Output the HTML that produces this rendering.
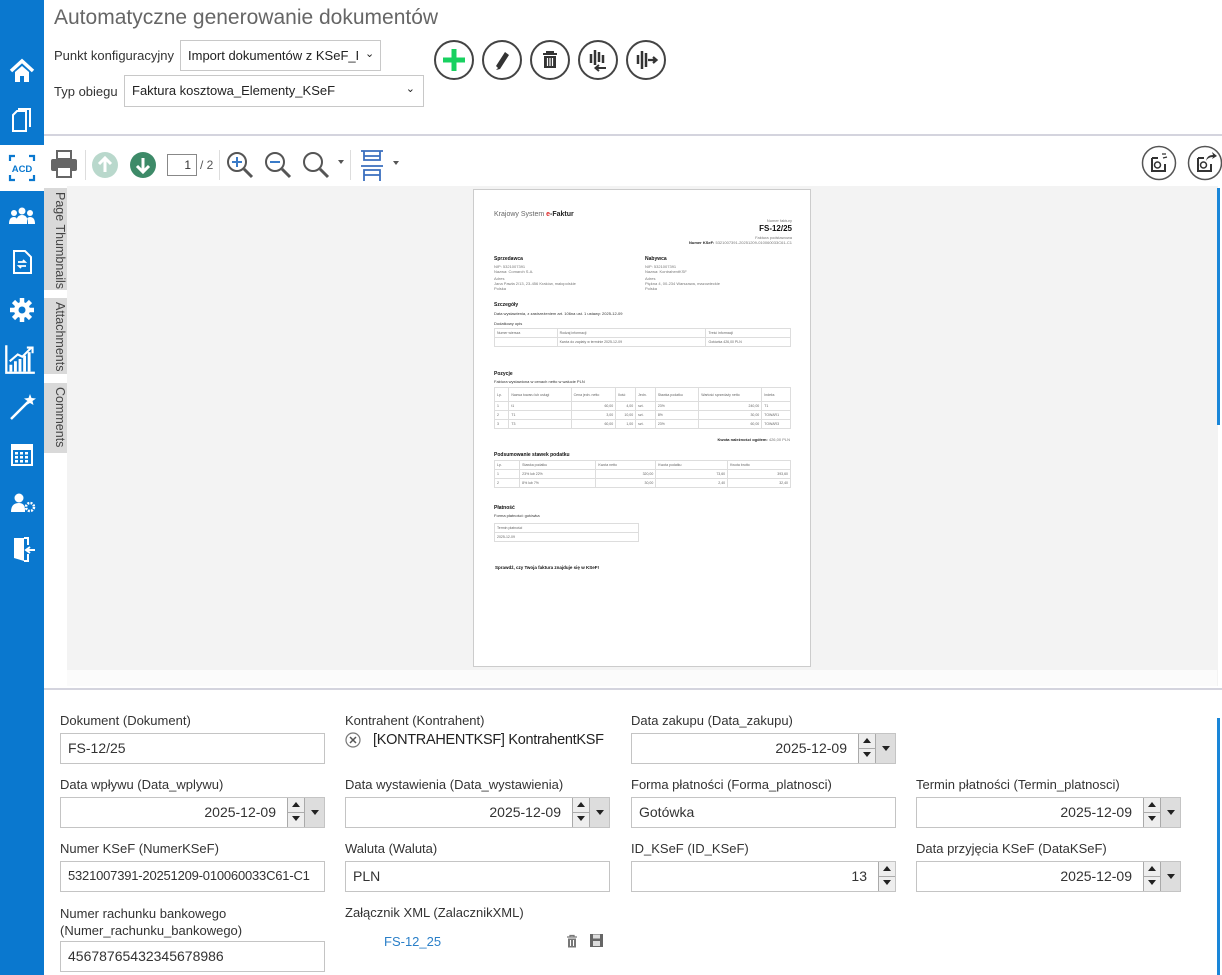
<!DOCTYPE html>
<html><head><meta charset="utf-8"><style>
*{box-sizing:border-box;margin:0;padding:0}
body{width:1222px;height:975px;overflow:hidden;background:#fff;font-family:"Liberation Sans",sans-serif;position:relative;color:#333}
.abs{position:absolute}
.side{left:0;top:0;width:44px;height:975px;background:#0a78cf}
.sel{left:0;top:145px;width:44px;height:46px;background:#fff}
.ic{position:absolute;left:8px;width:28px;height:28px}
.title{left:54px;top:6px;font-size:21px;color:#666;font-weight:normal}
.lbl{font-size:13px;color:#333}
.sel1{border:1px solid #c8c8c8;height:31px;font-size:13px;color:#222;padding:7px 7px;background:#fff;white-space:nowrap;overflow:hidden}
.circ{width:40px;height:40px;border:2px solid #444;border-radius:50%;top:40px}
.hline{left:44px;width:1178px;height:2px;background:#d4d4de}
.tab{left:44px;width:23px;background:#d9d9d9;writing-mode:vertical-rl;font-size:12.5px;color:#444;padding-top:4px}
.page{left:473px;top:189px;width:338px;height:478px;background:#fff;border:1px solid #ccc;font-size:4px;color:#777}
.page div{position:absolute}
.b{color:#111;font-weight:bold}
table{border-collapse:collapse;position:absolute;font-size:3.5px;color:#666}
td{border:1px solid #ddd;padding:2px 2px;height:8px}
.fl{position:absolute;font-size:13px;color:#333;white-space:nowrap}
.in{position:absolute;height:31px;border:1px solid #c4c4c4;font-size:14px;color:#333;padding:6px 7px;background:#fff;white-space:nowrap;overflow:hidden}
.dt{text-align:right;padding-right:48px}
.sp{position:absolute;right:20px;top:0;width:17px;height:29px;border-left:1px solid #aaa;background:#eee}
.sp:before{content:"";position:absolute;left:4px;top:4px;border:4px solid transparent;border-bottom:5px solid #222;border-top:0}
.sp:after{content:"";position:absolute;left:4px;top:18px;border:4px solid transparent;border-top:5px solid #222;border-bottom:0}
.sp i{position:absolute;left:0;top:14px;width:16px;height:1px;background:#aaa}
.dd{position:absolute;right:0;top:0;width:20px;height:29px;background:#ddd;border-left:1px solid #aaa}
.dd:after{content:"";position:absolute;left:6px;top:12px;border:4px solid transparent;border-top:5px solid #222;border-bottom:0}
</style></head><body>
<div class="abs side"></div>
<div class="abs sel"></div>
<svg class="ic" style="top:57px" viewBox="0 0 28 28"><path d="M3 14 L14 4 L25 14" stroke="#fff" stroke-width="3.5" fill="none"/><path d="M7 15 V25 H12 V19 H16 V25 H21 V15 L14 9Z" fill="#fff"/></svg>
<svg class="ic" style="top:105px" viewBox="0 0 28 28"><path d="M10 4 H22 V22" stroke="#fff" stroke-width="2" fill="none"/><path d="M5 10 L9 6 H18 V26 H5 Z" stroke="#fff" stroke-width="2" fill="none"/></svg>
<svg class="ic" style="top:154px" viewBox="0 0 28 28"><path d="M2 7V2H7M21 2H26V7M2 21V26H7M21 26H26V21" stroke="#0a78cf" stroke-width="2.2" fill="none"/><text x="14" y="18" font-size="9.5" font-weight="bold" fill="#0a78cf" text-anchor="middle" font-family="Liberation Sans">ACD</text></svg>
<svg class="ic" style="top:202px" viewBox="0 0 28 28"><circle cx="14" cy="9" r="3.5" fill="#fff"/><circle cx="6" cy="11" r="3" fill="#fff"/><circle cx="22" cy="11" r="3" fill="#fff"/><path d="M8 22 Q8 13 14 13 Q20 13 20 22Z M1 22 Q1 15 6 15 Q9 15 9 18 V22Z M27 22 Q27 15 22 15 Q19 15 19 18 V22Z" fill="#fff"/></svg>
<svg class="ic" style="top:248px" viewBox="0 0 28 28"><path d="M6 3 H17 L23 9 V25 H6 Z" stroke="#fff" stroke-width="2" fill="none"/><path d="M10 14 H17 L15 12 M18 18 H11 L13 20" stroke="#fff" stroke-width="1.8" fill="none"/></svg>
<svg class="ic" style="top:296px" viewBox="0 0 28 28"><circle cx="14" cy="14" r="8" fill="#fff"/><path d="M14 2V26M2 14H26M5.5 5.5L22.5 22.5M22.5 5.5L5.5 22.5" stroke="#fff" stroke-width="4.5"/><circle cx="14" cy="14" r="3.5" fill="#0a78cf"/></svg>
<svg class="ic" style="top:343px;left:4px;width:32px;height:32px" viewBox="0 0 28 28"><path d="M2 2V26H27" stroke="#fff" stroke-width="2" fill="none"/><path d="M6 25V19M10 25V16M14 25V14M18 25V11M22 25V8" stroke="#fff" stroke-width="2.5"/><path d="M5 16 L12 10 L16 12 L24 4 M20 4H25V9" stroke="#fff" stroke-width="1.8" fill="none"/></svg>
<svg class="ic" style="top:392px" viewBox="0 0 28 28"><path d="M3 27 L20 10" stroke="#fff" stroke-width="2.5"/><path d="M22 2 L23.5 6 L28 6.5 L24.5 9 L25.5 13 L22 11 L18.5 13 L19.5 9 L16 6.5 L20.5 6Z" fill="#fff"/></svg>
<svg class="ic" style="top:441px" viewBox="0 0 28 28"><rect x="3" y="3" width="22" height="22" fill="#fff"/><rect x="5" y="9" width="18" height="14" fill="#0a78cf"/><g fill="#fff"><rect x="7" y="11" width="3" height="2.5"/><rect x="12" y="11" width="3" height="2.5"/><rect x="17" y="11" width="3" height="2.5"/><rect x="7" y="15" width="3" height="2.5"/><rect x="12" y="15" width="3" height="2.5"/><rect x="17" y="15" width="3" height="2.5"/><rect x="7" y="19" width="3" height="2.5"/><rect x="12" y="19" width="3" height="2.5"/><rect x="17" y="19" width="3" height="2.5"/></g></svg>
<svg class="ic" style="top:488px" viewBox="0 0 28 28"><circle cx="11" cy="10" r="4.5" fill="#fff"/><path d="M3 24 Q3 15 11 15 Q17 15 17 22 V24Z" fill="#fff"/><circle cx="22" cy="19" r="4" fill="none" stroke="#fff" stroke-width="2.5" stroke-dasharray="2 1.2"/></svg>
<svg class="ic" style="top:535px" viewBox="0 0 28 28"><path d="M6 3 H16 V26 L6 23Z" fill="#fff"/><path d="M16 3 H20 V10 M20 19 V26 H16" stroke="#fff" stroke-width="2" fill="none"/><path d="M18 15 H27 M22 12 L18 15 L22 18" stroke="#fff" stroke-width="2" fill="none"/></svg>

<div class="abs title">Automatyczne generowanie dokumentów</div>
<div class="abs lbl" style="left:54px;top:48px">Punkt konfiguracyjny</div>
<div class="abs sel1" style="left:180px;top:40px;width:201px">Import dokumentów z KSeF_Fa<span style="position:absolute;right:0;top:0;width:22px;height:29px;background:#fff;font-size:11px;padding:6px 7px">⌄</span></div>
<div class="abs lbl" style="left:54px;top:84px">Typ obiegu</div>
<div class="abs sel1" style="left:124px;top:75px;width:300px;height:32px">Faktura kosztowa_Elementy_KSeF<span style="position:absolute;right:8px;top:6px;font-size:11px">⌄</span></div>

<div class="abs circ" style="left:434px"><svg width="36" height="36" viewBox="0 0 36 36"><path d="M18 7V29M7 18H29" stroke="#18d160" stroke-width="5"/></svg></div>
<div class="abs circ" style="left:482px"><svg width="36" height="36" viewBox="0 0 36 36"><path d="M14 26 L12 24 L21 10 L25 13 L16 27 L12 28Z" fill="#333"/></svg></div>
<div class="abs circ" style="left:530px"><svg width="36" height="36" viewBox="0 0 36 36"><path d="M11 12H25M15 12V10H21V12" stroke="#333" stroke-width="2" fill="none"/><path d="M12 14H24V26H12Z" fill="#333"/><path d="M15.5 16V24M18 16V24M20.5 16V24" stroke="#fff" stroke-width="1.2"/></svg></div>
<div class="abs circ" style="left:578px"><svg width="36" height="36" viewBox="0 0 36 36"><path d="M11 12V21M15 8V23M19 10V20M23 13V21" stroke="#333" stroke-width="2.5"/><path d="M26 26H16M19 23L15.5 26L19 29" stroke="#333" stroke-width="2" fill="none"/></svg></div>
<div class="abs circ" style="left:626px"><svg width="36" height="36" viewBox="0 0 36 36"><path d="M10 13V22M14 9V27M18 11V25" stroke="#333" stroke-width="2.5"/><path d="M20 18H28M25 15L28.5 18L25 21" stroke="#333" stroke-width="2.2" fill="none"/></svg></div>

<div class="abs hline" style="top:134px"></div>

<svg class="abs" style="left:48px;top:148px" width="32" height="32" viewBox="0 0 32 32"><rect x="9" y="3" width="14" height="8" fill="none" stroke="#666" stroke-width="2"/><rect x="3" y="11" width="26" height="12" rx="2" fill="#666"/><rect x="9" y="19" width="14" height="10" fill="#fff" stroke="#666" stroke-width="2"/></svg>
<div class="abs" style="left:85px;top:150px;width:1px;height:30px;background:#ddd"></div>
<svg class="abs" style="left:91px;top:151px" width="28" height="28" viewBox="0 0 28 28"><circle cx="14" cy="14" r="13" fill="#b9d8cc"/><path d="M14 21V8M8 13L14 7L20 13" stroke="#fff" stroke-width="3" fill="none"/></svg>
<svg class="abs" style="left:129px;top:151px" width="28" height="28" viewBox="0 0 28 28"><circle cx="14" cy="14" r="13" fill="#3d8a68"/><path d="M14 7V20M8 15L14 21L20 15" stroke="#fff" stroke-width="3" fill="none"/></svg>
<div class="abs" style="left:167px;top:154px;width:30px;height:22px;border:1px solid #888;font-size:12px;text-align:right;padding:3px 5px;color:#333">1</div>
<div class="abs" style="left:200px;top:158px;font-size:12px;color:#555">/ 2</div>
<div class="abs" style="left:219px;top:150px;width:1px;height:30px;background:#ddd"></div>
<svg class="abs" style="left:224px;top:149px" width="32" height="32" viewBox="0 0 32 32"><circle cx="13" cy="13" r="9" fill="none" stroke="#555" stroke-width="2"/><path d="M20 20L28 28" stroke="#555" stroke-width="3"/><path d="M13 8V18M8 13H18" stroke="#3a7bc8" stroke-width="2"/></svg>
<svg class="abs" style="left:262px;top:149px" width="32" height="32" viewBox="0 0 32 32"><circle cx="13" cy="13" r="9" fill="none" stroke="#555" stroke-width="2"/><path d="M20 20L28 28" stroke="#555" stroke-width="3"/><path d="M8 13H18" stroke="#3a7bc8" stroke-width="2"/></svg>
<svg class="abs" style="left:300px;top:149px" width="32" height="32" viewBox="0 0 32 32"><circle cx="13" cy="13" r="9" fill="none" stroke="#555" stroke-width="2"/><path d="M20 20L28 28" stroke="#555" stroke-width="3"/></svg>
<div class="abs" style="left:338px;top:160px;border:3px solid transparent;border-top:4px solid #555"></div>
<div class="abs" style="left:350px;top:150px;width:1px;height:30px;background:#ddd"></div>
<svg class="abs" style="left:358px;top:148px" width="28" height="34" viewBox="0 0 28 34"><path d="M3 3H25M6 3V12H22V3M6 8H22M3 18H25M6 33V22H22V33M6 27H22" stroke="#3a6fbf" stroke-width="1.8" fill="none"/></svg>
<div class="abs" style="left:393px;top:161px;border:3px solid transparent;border-top:4px solid #555"></div>
<svg class="abs" style="left:1141px;top:145px" width="36" height="36" viewBox="0 0 36 36"><circle cx="18" cy="18" r="16.5" fill="#fff" stroke="#555" stroke-width="1.5"/><path d="M11 13H17M11 13V26H24V19" stroke="#333" stroke-width="2" fill="none"/><circle cx="16.5" cy="20" r="3" fill="none" stroke="#333" stroke-width="1.5"/><path d="M21 9L25 9M22 13L26 12" stroke="#333" stroke-width="1.3"/></svg>
<svg class="abs" style="left:1187px;top:145px" width="36" height="36" viewBox="0 0 36 36"><circle cx="18" cy="18" r="16.5" fill="#fff" stroke="#555" stroke-width="1.5"/><path d="M11 13H17M11 13V26H24V19" stroke="#333" stroke-width="2" fill="none"/><circle cx="16.5" cy="20" r="3" fill="none" stroke="#333" stroke-width="1.5"/><path d="M19 16Q20 10 26 10L25 7L30 11L25 14L26 12Q21 12 19 16Z" fill="#333"/></svg>

<div class="abs" style="left:67px;top:186px;width:1151px;height:500px;background:#f3f3f3"></div>
<div class="abs" style="left:67px;top:670px;width:1150px;height:16px;background:#fbfbfb"></div>
<div class="abs" style="left:1217px;top:188px;width:3px;height:237px;background:#1a86d8"></div>
<div class="abs tab" style="left:44px;top:188px;height:102px">Page Thumbnails</div>
<div class="abs tab" style="left:44px;top:298px;height:76px">Attachments</div>
<div class="abs tab" style="left:44px;top:383px;height:70px">Comments</div>

<div class="abs page">
<div style="left:20px;top:21px;font-size:7px;color:#666">Krajowy System <b style="color:#d22">e</b><b style="color:#222">-Faktur</b></div>
<div style="right:18px;top:28px">Numer faktury</div>
<div class="b" style="right:18px;top:34px;font-size:8px">FS-12/25</div>
<div style="right:18px;top:45px">Faktura podstawowa</div>
<div style="right:18px;top:50px"><b style="color:#222">Numer KSeF:</b> 5321007391-20251209-010060033C61-C1</div>
<div class="b" style="left:20px;top:66px;font-size:5px">Sprzedawca</div>
<div style="left:20px;top:74px">NIP: 5321007391<br>Nazwa: Comarch S.A.</div>
<div style="left:20px;top:86px">Adres<br>Jana Pawła 2/13, 23-456 Kraków, małopolskie<br>Polska</div>
<div class="b" style="left:171px;top:66px;font-size:5px">Nabywca</div>
<div style="left:171px;top:74px">NIP: 5321007391<br>Nazwa: KontrahentKSF</div>
<div style="left:171px;top:86px">Adres<br>Piękna 4, 00-234 Warszawa, mazowieckie<br>Polska</div>
<div class="b" style="left:20px;top:112px;font-size:5px">Szczegóły</div>
<div style="left:20px;top:121px;color:#333">Data wystawienia, z zastrzeżeniem art. 106na ust. 1 ustawy: 2025-12-09</div>
<div style="left:20px;top:131px;color:#333">Dodatkowy opis</div>
<table style="left:20px;top:138px;width:297px"><tr><td>Numer wiersza</td><td>Rodzaj informacji</td><td>Treść informacji</td></tr><tr><td></td><td>Kwota do zapłaty w terminie 2025-12-09</td><td>Gotówka 426,00 PLN</td></tr></table>
<div class="b" style="left:20px;top:181px;font-size:5px">Pozycje</div>
<div style="left:20px;top:189px;color:#333">Faktura wystawiona w cenach netto w walucie PLN</div>
<table style="left:20px;top:197px;width:297px"><tr style="height:14px"><td>Lp.</td><td>Nazwa towaru lub usługi</td><td>Cena jedn. netto</td><td>Ilość</td><td>Jedn.</td><td>Stawka podatku</td><td>Wartość sprzedaży netto</td><td>Indeks</td></tr><tr><td>1</td><td>t1</td><td align="right">60,00</td><td align="right">4,00</td><td>szt.</td><td>23%</td><td align="right">240,00</td><td>T1</td></tr><tr><td>2</td><td>T1</td><td align="right">3,00</td><td align="right">10,00</td><td>szt.</td><td>8%</td><td align="right">30,00</td><td>TOWAR1</td></tr><tr><td>3</td><td>T3</td><td align="right">60,00</td><td align="right">1,00</td><td>szt.</td><td>23%</td><td align="right">60,00</td><td>TOWAR3</td></tr></table>
<div style="right:20px;top:247px"><b style="color:#222">Kwota należności ogółem:</b> 426,00 PLN</div>
<div class="b" style="left:20px;top:262px;font-size:5px">Podsumowanie stawek podatku</div>
<table style="left:20px;top:270px;width:297px"><tr><td>Lp.</td><td>Stawka podatku</td><td>Kwota netto</td><td>Kwota podatku</td><td>Kwota brutto</td></tr><tr><td>1</td><td>23% lub 22%</td><td align="right">320,00</td><td align="right">73,60</td><td align="right">393,60</td></tr><tr><td>2</td><td>8% lub 7%</td><td align="right">30,00</td><td align="right">2,40</td><td align="right">32,40</td></tr></table>
<div class="b" style="left:20px;top:315px;font-size:5px">Płatność</div>
<div style="left:20px;top:323px;color:#333">Forma płatności: gotówka</div>
<table style="left:20px;top:333px;width:145px"><tr><td>Termin płatności</td></tr><tr><td>2025-12-09</td></tr></table>
<div class="b" style="left:21px;top:375px;font-size:4.5px">Sprawdź, czy Twoja faktura znajduje się w KSeF!</div>
</div>

<div class="abs hline" style="top:688px"></div>
<div class="abs" style="left:1217px;top:718px;width:3px;height:257px;background:#1a86d8"></div>

<div class="fl" style="left:60px;top:713px">Dokument (Dokument)</div>
<div class="in" style="left:60px;top:733px;width:265px">FS-12/25</div>
<div class="fl" style="left:345px;top:713px">Kontrahent (Kontrahent)</div>
<svg class="abs" style="left:345px;top:732px" width="16" height="16" viewBox="0 0 16 16"><circle cx="8" cy="8" r="7" fill="none" stroke="#777" stroke-width="1.2"/><path d="M5 5L11 11M11 5L5 11" stroke="#555" stroke-width="1.5"/></svg>
<div class="fl" style="left:373px;top:732px;font-size:14.5px;color:#222;letter-spacing:-0.3px">[KONTRAHENTKSF] KontrahentKSF</div>
<div class="fl" style="left:631px;top:713px">Data zakupu (Data_zakupu)</div>
<div class="in dt" style="left:631px;top:733px;width:265px">2025-12-09<div class="sp"><i></i></div><div class="dd"></div></div>

<div class="fl" style="left:60px;top:777px">Data wpływu (Data_wplywu)</div>
<div class="in dt" style="left:60px;top:797px;width:265px">2025-12-09<div class="sp"><i></i></div><div class="dd"></div></div>
<div class="fl" style="left:345px;top:777px">Data wystawienia (Data_wystawienia)</div>
<div class="in dt" style="left:345px;top:797px;width:265px">2025-12-09<div class="sp"><i></i></div><div class="dd"></div></div>
<div class="fl" style="left:631px;top:777px">Forma płatności (Forma_platnosci)</div>
<div class="in" style="left:631px;top:797px;width:265px">Gotówka</div>
<div class="fl" style="left:916px;top:777px">Termin płatności (Termin_platnosci)</div>
<div class="in dt" style="left:916px;top:797px;width:265px">2025-12-09<div class="sp"><i></i></div><div class="dd"></div></div>

<div class="fl" style="left:60px;top:841px">Numer KSeF (NumerKSeF)</div>
<div class="in" style="left:60px;top:861px;width:265px;font-size:13px;letter-spacing:-0.2px">5321007391-20251209-010060033C61-C1</div>
<div class="fl" style="left:345px;top:841px">Waluta (Waluta)</div>
<div class="in" style="left:345px;top:861px;width:265px">PLN</div>
<div class="fl" style="left:631px;top:841px">ID_KSeF (ID_KSeF)</div>
<div class="in" style="left:631px;top:861px;width:265px;text-align:right;padding-right:28px">13<div class="sp" style="right:0"><i></i></div></div>
<div class="fl" style="left:916px;top:841px">Data przyjęcia KSeF (DataKSeF)</div>
<div class="in dt" style="left:916px;top:861px;width:265px">2025-12-09<div class="sp"><i></i></div><div class="dd"></div></div>

<div class="fl" style="left:60px;top:905px;line-height:17px">Numer rachunku bankowego<br>(Numer_rachunku_bankowego)</div>
<div class="in" style="left:60px;top:941px;width:265px">45678765432345678986</div>
<div class="fl" style="left:345px;top:905px">Załącznik XML (ZalacznikXML)</div>
<div class="fl" style="left:384px;top:934px;color:#2a7fc8">FS-12_25</div>
<svg class="abs" style="left:565px;top:934px" width="14" height="14" viewBox="0 0 14 14"><path d="M2 3H12M5 3V1.5H9V3" stroke="#777" stroke-width="1.3" fill="none"/><rect x="3" y="4.5" width="8" height="9" fill="#777"/><path d="M5.5 6V12M8.5 6V12" stroke="#fff"/></svg>
<svg class="abs" style="left:590px;top:934px" width="13" height="13" viewBox="0 0 13 13"><rect x="0" y="0" width="13" height="13" fill="#666"/><rect x="3" y="0.5" width="7" height="4" fill="#ddd"/><rect x="3" y="7" width="7" height="5" fill="#ddd"/></svg>
</body></html>
